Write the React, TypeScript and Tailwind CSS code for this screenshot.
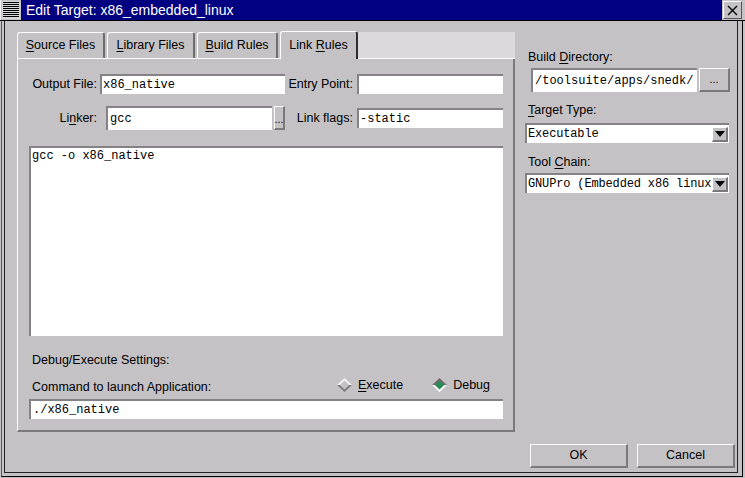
const GRAY = "bg-[#c5c2c5]";
const mono = "font-['Liberation_Mono','Courier_New',monospace] text-[12px]";
const sunken =
  "bg-white border-t-2 border-l-2 border-t-[#858285] border-l-[#858285]";
const raised =
  "bg-[#c5c2c5] border-t border-l border-t-white border-l-white border-r-2 border-b-2 border-r-[#7b797b] border-b-[#7b797b]";

function U({ children }: { children: string }) {
  return <span className="underline underline-offset-[2px]">{children}</span>;
}

function MenuIcon() {
  const lines = [3, 5, 7, 9, 11, 13, 15, 17];
  return (
    <svg width="21" height="20" viewBox="0 0 21 20" className="block">
      <rect x="0" y="0" width="21" height="20" fill="#c5c2c5" />
      <rect x="0" y="0" width="1" height="20" fill="#f0f0f0" />
      <rect x="2" y="1" width="18" height="18" fill="#d8d6d8" />
      {lines.map((y) => (
        <rect key={y} x="3" y={y - 1} width="16" height="1" fill="#000" />
      ))}
    </svg>
  );
}

function CloseBox() {
  return (
    <div className="w-[19px] h-[18px] mt-[1px] border-t border-l border-t-white border-l-white border-r border-b border-r-[#555] border-b-[#555] bg-[#c5c2c5] flex items-center justify-center">
      <svg width="11" height="11" viewBox="0 0 11 11">
        <path d="M1 1 L10 10 M10 1 L1 10" stroke="#000" strokeWidth="1.4" />
      </svg>
    </div>
  );
}

function TitleBar() {
  return (
    <div className="h-[21px] shrink-0 flex border-b border-b-black">
      <MenuIcon />
      <div className="flex-1 bg-[#000080] text-white text-[14px] pl-[5px] flex items-center whitespace-nowrap">
        Edit Target: x86_embedded_linux
      </div>
      <div className="w-[22px] flex justify-start pl-[1px]">
        <CloseBox />
      </div>
      <div className="w-[1px]" />
    </div>
  );
}

function Tab({ w, children, first }: { w: string; children: React.ReactNode; first?: boolean }) {
  return (
    <div
      className={`${w} ${first ? "" : "ml-[2px]"} h-[26px] flex items-center justify-center border-t border-l border-t-white border-l-white border-r-2 border-r-[#6f6d6f] rounded-tl-[3px] rounded-tr-[3px] whitespace-nowrap`}
    >
      {children}
    </div>
  );
}

function Diamond({ on }: { on?: boolean }) {
  return (
    <svg width="15" height="14" viewBox="0 0 15 14" className="block">
      <polygon points="7.5,0 15,7 0,7" fill={on ? "#6f6d6f" : "#f4f4f4"} />
      <polygon points="0,7 15,7 7.5,14" fill={on ? "#ffffff" : "#7b797b"} />
      <polygon points="7.5,2.5 12.3,7 7.5,11.5 2.7,7" fill={on ? "#2e8a55" : "#c5c2c5"} />
    </svg>
  );
}

function Notebook() {
  return (
    <div className="w-[498px] flex flex-col">
      <div className="h-[28px] flex items-end border-b border-b-white">
        <Tab w="w-[88px]" first>
          <span>
            <U>S</U>ource Files
          </span>
        </Tab>
        <Tab w="w-[88px]">
          <span>
            <U>L</U>ibrary Files
          </span>
        </Tab>
        <Tab w="w-[81px]">
          <span>
            <U>B</U>uild Rules
          </span>
        </Tab>
        <div className="w-[78px] ml-[2px] h-[28px] -mb-px bg-[#c5c2c5] flex items-center justify-center border-t border-l border-t-white border-l-white border-r-2 border-r-[#2e2e2e] rounded-tl-[3px] rounded-tr-[3px] whitespace-nowrap">
          <span>
            Link <U>R</U>ules
          </span>
        </div>
        <div className="flex-1 h-[26px] bg-[#dcd9dc]" />
      </div>

      <div className="flex-1 flex flex-col border-l border-l-white border-r-2 border-r-[#7b797b] border-b-2 border-b-[#7b797b] pt-[15px] pl-[11px]">
        <div className="flex items-center h-[20px]">
          <span className="w-[68px] text-right whitespace-nowrap">Output File:</span>
          <div className={`${sunken} ml-[3px] w-[185px] h-[20px] pl-[1px] flex items-center ${mono}`}>
            x86_native
          </div>
          <span className="w-[68px] text-right whitespace-nowrap">Entry Point:</span>
          <div className={`${sunken} ml-[4px] w-[146px] h-[20px]`} />
        </div>

        <div className="flex items-center h-[24px] mt-[12px]">
          <span className="w-[68px] text-right whitespace-nowrap">
            Li<U>n</U>ker:
          </span>
          <div className={`${sunken} ml-[9px] w-[166px] h-[24px] pl-[2px] flex items-center ${mono}`}>
            gcc
          </div>
          <div className={`${raised} ml-[2px] w-[11px] h-[24px] flex items-end justify-center text-[11px] leading-[16px] pb-[1px]`}>
            ...
          </div>
          <span className="w-[68px] text-right whitespace-nowrap">Link flags:</span>
          <div className={`${sunken} ml-[4px] w-[146px] h-[20px] pl-[1px] flex items-center ${mono}`}>
            -static
          </div>
        </div>

        <div className={`${sunken} mt-[16px] w-[474px] h-[190px] pl-[1px] pt-[1px] leading-[14px] ${mono}`}>
          gcc -o x86_native
        </div>

        <div className="mt-[17px] ml-[3px] h-[14px] leading-[14px] whitespace-nowrap">
          Debug/Execute Settings:
        </div>

        <div className="mt-[11px] h-[16px] w-[474px] flex items-start">
          <span className="ml-[3px] mt-[2px] leading-[14px] whitespace-nowrap">
            Command to launch Application:
          </span>
          <div className="ml-auto mr-[13px] flex items-center h-[14px] leading-[14px]">
            <Diamond />
            <span className="ml-[6px]">
              <U>E</U>xecute
            </span>
            <span className="ml-[29px]">
              <Diamond on />
            </span>
            <span className="ml-[6px]">
              Debu<U>g</U>
            </span>
          </div>
        </div>

        <div className={`${sunken} mt-[5px] w-[474px] h-[20px] pl-[2px] flex items-center ${mono}`}>
          ./x86_native
        </div>
      </div>
    </div>
  );
}

function Dropdown({ text, className }: { text: string; className: string }) {
  return (
    <div className={`${sunken} ${className} w-[204px] h-[20px] flex items-center`}>
      <div className={`flex-1 pl-[1px] whitespace-nowrap tracking-[-0.15px] ${mono}`}>{text}</div>
      <div className={`${raised} w-[16px] h-[15px] mr-[1px] flex items-center justify-center`}>
        <svg width="10" height="6" viewBox="0 0 10 6">
          <polygon points="0,0 10,0 5,6" fill="#000" />
        </svg>
      </div>
    </div>
  );
}

function RightColumn() {
  return (
    <div className="ml-[10px] w-[205px] flex flex-col">
      <div className="mt-[19px] ml-[3px] h-[14px] leading-[14px] whitespace-nowrap">
        Build <U>D</U>irectory:
      </div>
      <div className="mt-[4px] flex h-[24px]">
        <div className={`${sunken} ml-[6px] w-[166px] h-[24px] pl-[2px] flex items-center whitespace-nowrap ${mono}`}>
          /toolsuite/apps/snedk/
        </div>
        <div className={`${raised} ml-[2px] w-[31px] h-[24px] flex items-center justify-center text-[11px]`}>
          ...
        </div>
      </div>
      <div className="mt-[11px] ml-[3px] h-[14px] leading-[14px] whitespace-nowrap">
        <U>T</U>arget Type:
      </div>
      <Dropdown className="mt-[6px]" text="Executable" />
      <div className="mt-[12px] ml-[3px] h-[14px] leading-[14px] whitespace-nowrap">
        Tool <U>C</U>hain:
      </div>
      <Dropdown className="mt-[4px]" text="GNUPro (Embedded x86 linux" />
    </div>
  );
}

function Button({ children }: { children: string }) {
  return (
    <div className={`${raised} w-[98px] h-[24px] flex items-center justify-center`}>{children}</div>
  );
}

export default function App() {
  return (
    <div
      className={`w-[745px] h-[478px] flex flex-col ${GRAY} text-black text-[12.5px] font-['Liberation_Sans',Arial,sans-serif] overflow-hidden select-none`}
    >
      <TitleBar />
      <div className="flex-1 flex flex-col ml-[1px] mr-[2px] mb-[1px] border-l border-l-[#5a5a5a] border-r border-r-black border-b border-b-black">
        <div className="flex-1 flex flex-col ml-[2px] mr-[4px] mb-[3px] border-l border-r border-b border-[#222] pl-[12px] pt-[10px] pr-[2px]">
          <div className="flex h-[401px]">
            <Notebook />
            <RightColumn />
          </div>
          <div className="flex justify-end gap-[9px] mt-[12px]">
            <Button>OK</Button>
            <Button>Cancel</Button>
          </div>
        </div>
      </div>
    </div>
  );
}
